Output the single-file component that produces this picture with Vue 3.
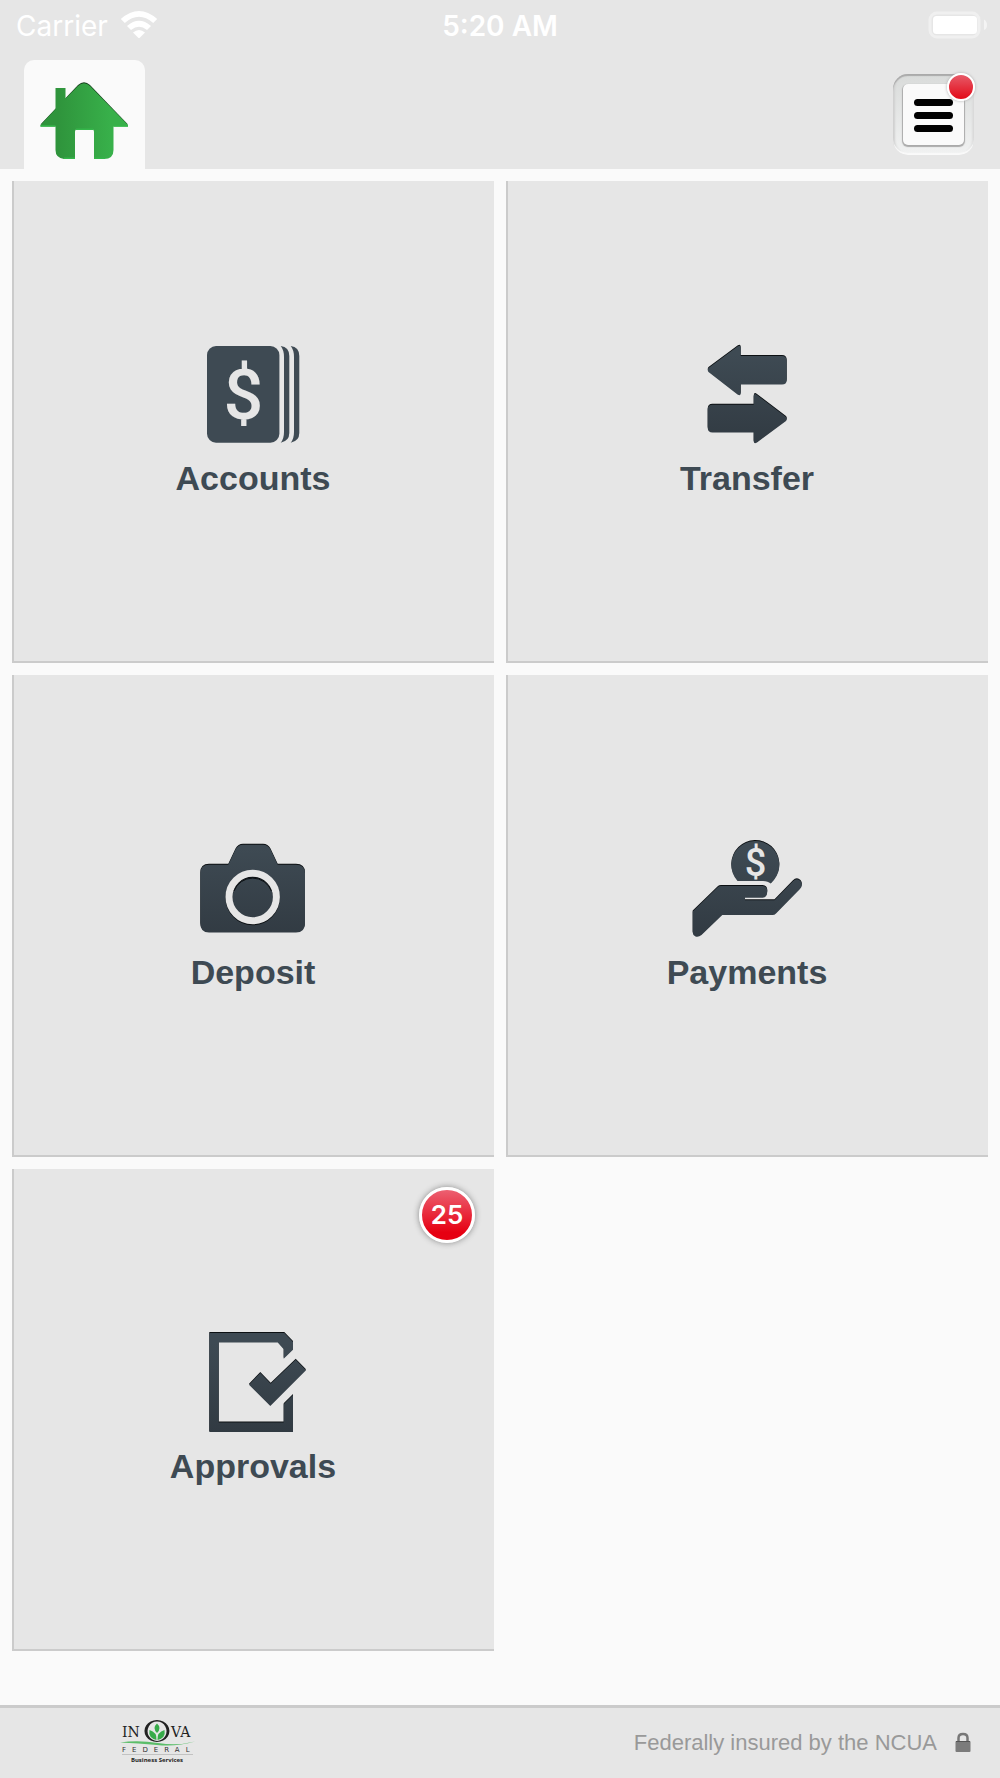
<script setup>
const tiles = [
  { id: 'accounts', label: 'Accounts' },
  { id: 'transfer', label: 'Transfer' },
  { id: 'deposit', label: 'Deposit' },
  { id: 'payments', label: 'Payments' },
  { id: 'approvals', label: 'Approvals', badge: 25 },
]

// Shapes that share the slate gradient and the dark upper edge
const shapes = {
  transfer:
    'M21.500 23 50.500 1.500Q53.700 -.5 53.700 3V11H95Q99.700 11 99.700 16V35Q99.700 39.500 95 39.500H53.700V48Q53.700 51.500 50.500 49.500L21.500 27Q20 25 21.500 23Z M66.700 51.500Q67 47.500 70 50L99 72Q100.500 74 99 76L70 97.500Q67 99.500 66.700 96.500V87.500H25.500Q20.700 87.500 20.700 82.500V64.500Q20.700 59.700 25.500 59.700H66.700Z',
  deposit:
    'M16 25.700H35.300L42.500 10.500Q45 5.700 50 5.700H70Q75 5.700 77.500 10.500L84.700 25.700H103Q112 25.700 112 34.500V84.500Q112 93.500 103 93.500H16Q7.300 93.500 7.300 84.500V34.500Q7.300 25.700 16 25.700Z',
  payments:
    'M50.500 42A24 24 0 1 1 87 41Q84 44.500 83.500 44.500Q81 42 76 42Z M5.700 72.500 31 48Q32 47 34 47H75.700Q80.300 47.500 80.300 52Q80.300 58.700 75.700 58.700H58V61.300H87.500L105.700 42.500Q109.700 38.500 113.500 42Q116.500 46 113 50L89 74.500Q87.500 76 85.500 76H35.300L14.500 96Q11.500 98.500 8.500 97.500Q5.700 96 5.700 93.500Z',
  approvals:
    'M16.300 0H91.300L100 9V16.700L90.700 25.700V16.300L84.700 9.500H25.700V89.500H90.700V71.300L100 62V99H16.300Z M56 51.700 67.300 40 77.700 50.700 102.700 26.700 113 37.300 77.300 73Z',
}
</script>

<template>
  <div class="screen">
    <header class="header">
      <div class="status">
        <div class="carrier">
          <span>Carrier</span>
          <svg class="wifi" viewBox="0 0 38 28" aria-hidden="true">
            <path d="M.8 8Q19 -8 37.200 8L33.200 12Q19 -.5 4.800 12Z" />
            <path d="M7 15Q19 4.500 31 15L27 19Q19 12.500 11 19Z" />
            <path d="M13 21.500Q19 16.500 25 21.500L20 26.500Q19 27.500 18 26.500Z" />
          </svg>
        </div>
        <span class="time">5:20 AM</span>
        <svg class="battery" viewBox="0 0 60 28" aria-label="Battery full">
          <rect x="2" y="2" width="49" height="24" rx="7" fill="none" stroke="#f0f0f0" stroke-width="3" />
          <rect x="5" y="5" width="44" height="18" rx="3.500" fill="#fff" />
          <path d="M56 8.500Q59 10 59 14T56 19Z" fill="#f4f4f4" />
        </svg>
      </div>
      <nav class="bar">
        <a class="home" href="#" aria-label="Home">
          <svg class="house" viewBox="0 0 88 78" aria-hidden="true">
            <defs>
              <linearGradient id="leaf">
                <stop offset=".2" stop-color="#2f943c" />
                <stop offset=".8" stop-color="#38b04a" />
              </linearGradient>
            </defs>
            <path d="M.5 42.500 38 3Q44 -2.500 50 3L88 42.500Z" fill="#153d1b" />
            <path d="M.5 43 15.500 27V6H25.500V16.500L38 4Q44 -1.500 50 4L88 43V44.500H73.500V68Q73.500 77 64 77H54V50Q54 47 51 47H38Q35 47 35 50V77H24Q15.500 76 15.500 68V44.500H.5Z" fill="url(#leaf)" />
            <path d="M.5 44H15.500M73.500 44H88M36 47.200H53M24 76.300H35M54 76.300H65" stroke="#35b64a" stroke-width="1.500" />
          </svg>
        </a>
        <button class="menu" type="button" aria-label="Menu">
          <span class="menu-face">
            <i class="line"></i>
            <i class="line"></i>
            <i class="line"></i>
          </span>
          <span class="dot"></span>
        </button>
      </nav>
    </header>

    <main class="grid">
      <button v-for="tile in tiles" :key="tile.id" class="tile" type="button">
        <svg class="icon" viewBox="0 0 120 104" aria-hidden="true">
          <defs>
            <linearGradient :id="`slate-${tile.id}`" gradientUnits="userSpaceOnUse" x1="0" y1="0" x2="0" y2="100">
              <stop offset=".1" stop-color="#3e4a53" />
              <stop offset="1" stop-color="#313a42" />
            </linearGradient>
          </defs>
          <g v-if="tile.id === 'accounts'" fill="#3e4a53">
            <rect x="14" y="2" width="72.400" height="96.700" rx="9" />
            <path d="M87.700 2Q96.300 3 96.300 12V89Q96.300 97 87.700 98.700Q91 95 91 88V13Q91 6 87.700 2Z" />
            <path d="M97.700 2Q106.300 3 106.300 12V89Q106.300 97 97.700 98.700Q101 95 101 88V13Q101 6 97.700 2Z" />
            <text class="dollar" x="50.500" y="75" font-size="70">$</text>
          </g>
          <template v-else>
            <path :d="shapes[tile.id]" fill="#0c1013" />
            <path :d="shapes[tile.id]" :fill="`url(#slate-${tile.id})`" transform="translate(0 1)" />
          </template>
          <g v-if="tile.id === 'deposit'" fill="none">
            <circle cx="59.700" cy="60" r="23.700" stroke="#0c1013" stroke-width="7" />
            <circle cx="59.700" cy="60.500" r="20" fill="url(#slate-deposit)" />
            <circle cx="59.700" cy="59" r="23.700" stroke="#e6e6e6" stroke-width="7" />
            <path d="M41 53A20 20 0 0 1 78.400 53" stroke="#0c1013" stroke-width="1" />
          </g>
          <text v-if="tile.id === 'payments'" class="dollar" x="68.500" y="38" font-size="38">$</text>
        </svg>
        <span class="label">{{ tile.label }}</span>
        <span v-if="tile.badge" class="badge">{{ tile.badge }}</span>
      </button>
    </main>

    <footer class="footer">
      <svg class="logo" viewBox="0 0 76 46" role="img" aria-label="Inova Federal Business Services">
        <g class="serif" font-size="14">
          <text x="2" y="17">IN</text>
          <text x="51" y="17">VA</text>
        </g>
        <path fill-rule="evenodd" d="M37 0A12.500 11 0 1 1 36.900 0ZM37 1.500A9.500 9.700 0 1 0 37.100 1.500Z" fill="#222" />
        <g fill="#37ab49">
          <path d="M37 3.500Q42 8 37 13Q32 8 37 3.500Z" />
          <path d="M29.500 10Q37 12 36.500 20Q28 18 29.500 10Z" />
          <path d="M44.500 10Q37 12 37.500 20Q46 18 44.500 10Z" />
        </g>
        <path d="M0 22.500Q18 20 38 23T75 21.500Q56 27 37 25T0 22.500Z" fill="#5bbd69" />
        <text class="federal" x="2" y="32" font-size="7">FEDERAL</text>
        <path d="M2 34.500H73" stroke="#aaa" stroke-width=".6" />
        <text class="services" x="37" y="42" font-size="6">Business Services</text>
      </svg>
      <div class="insured">
        <span>Federally insured by the NCUA</span>
        <svg class="lock" viewBox="0 0 16 22" aria-hidden="true">
          <path d="M3.500 10V6Q3.500 2 8 2T12.500 6V10" fill="none" stroke="#777" stroke-width="2.500" />
          <rect x=".5" y="9" width="15" height="11" rx="1" fill="#7b7b7b" />
          <path d="M1 9.500H15" stroke="#555" />
        </svg>
      </div>
    </footer>
  </div>
</template>

<style>
body {
  margin: 0;
  background: #fafafa;
}
</style>

<style scoped>
.screen {
  display: flex;
  flex-direction: column;
  min-height: 100vh;
  background: #fafafa;
  font-family: "Liberation Sans", Arial, sans-serif;
}

svg {
  display: block;
  flex: none;
}

button {
  padding: 0;
  border: 0;
  font: inherit;
  cursor: pointer;
}

.header {
  background: #e6e6e6;
}

.status {
  display: grid;
  grid-template-columns: 1fr auto 1fr;
  align-items: center;
  height: 48px;
  padding: 0 12px;
  color: #fff;
  font: 28px/48px Inter, sans-serif;
}

.carrier {
  display: flex;
  align-items: center;
  gap: 12px;
  padding-left: 4px;
}

.carrier span,
.time {
  padding-top: 2px;
}

.wifi {
  width: 38px;
  height: 28px;
  fill: #fff;
}

.time {
  font-weight: 600;
}

.battery {
  width: 60px;
  height: 28px;
  justify-self: end;
}

.bar {
  display: flex;
  justify-content: space-between;
  align-items: flex-end;
  padding: 12px 26px 0 24px;
}

.home {
  display: flex;
  justify-content: center;
  align-items: flex-end;
  box-sizing: border-box;
  width: 121px;
  height: 109px;
  padding: 0 2px 9px 0;
  border-radius: 10px 10px 0 0;
  background: #fafafa;
}

.house {
  width: 88px;
  height: 78px;
}

.menu {
  position: relative;
  display: flex;
  justify-content: center;
  align-items: center;
  width: 81px;
  height: 81px;
  margin-bottom: 14px;
  border-radius: 15px;
  background: linear-gradient(#d9dbda, #f1f2f2);
  box-shadow: inset 0 2px 1px #aaa, inset 0 -2px 1px #fafafa, inset 2px 0 2px #d0d0d0, inset -2px 0 2px #dcdcdc;
}

.menu-face {
  display: flex;
  flex-direction: column;
  justify-content: center;
  align-items: center;
  gap: 6px;
  box-sizing: border-box;
  width: 61px;
  height: 61px;
  padding-top: 2px;
  border-radius: 5px;
  background: #fafafa;
  box-shadow: 0 1px 1px 1px #aaa;
}

.line {
  width: 39px;
  height: 7px;
  border-radius: 4px;
  background: #000;
}

.dot {
  position: absolute;
  top: -1px;
  right: -1px;
  box-sizing: border-box;
  width: 28px;
  height: 28px;
  border: 2px solid #fff;
  border-radius: 50%;
  background: linear-gradient(#e75a68, #e30a18);
  box-shadow: 0 0 3px #aaa;
}

.grid {
  display: grid;
  flex: 1;
  grid-template-columns: repeat(2, 1fr);
  align-content: start;
  gap: 12px;
  padding: 12px 12px 48px;
}

.tile {
  position: relative;
  display: flex;
  flex-direction: column;
  justify-content: center;
  align-items: center;
  gap: 10px;
  box-sizing: border-box;
  aspect-ratio: 1;
  padding-bottom: 2px;
  background: #e6e6e6;
  box-shadow: inset 2px -2px #cbcbcb;
  color: #3e4a53;
}

.icon {
  width: 120px;
  height: 104px;
}

.dollar {
  fill: #e6e6e6;
  font-family: Roboto, sans-serif;
  font-weight: 500;
  text-anchor: middle;
}

.label {
  font-size: 34px;
  font-weight: 700;
  line-height: 40px;
}

.badge {
  position: absolute;
  top: 18px;
  right: 19px;
  box-sizing: border-box;
  width: 56px;
  height: 56px;
  border: 3px solid #fff;
  border-radius: 50%;
  background: linear-gradient(#ec6071, #e60012 85%);
  box-shadow: 0 0 6px #888;
  color: #fff;
  font: 600 26px/50px Inter, sans-serif;
  text-align: center;
}

.footer {
  display: flex;
  justify-content: space-between;
  align-items: center;
  box-sizing: border-box;
  height: 73px;
  padding: 0 29px 0 120px;
  border-top: 3px solid #cbcbcb;
  background: #e6e6e6;
}

.logo {
  width: 76px;
  height: 46px;
  fill: #222;
}

.serif {
  font-family: "DejaVu Serif", serif;
}

.federal {
  font-family: "DejaVu Sans", sans-serif;
  letter-spacing: 6px;
  fill: #333;
}

.services {
  font-family: "Open Sans", sans-serif;
  font-weight: 700;
  text-anchor: middle;
}

.insured {
  display: flex;
  align-items: center;
  gap: 18px;
  color: #999;
  font-size: 22px;
  line-height: 26px;
}

.lock {
  width: 16px;
  height: 22px;
}
</style>
